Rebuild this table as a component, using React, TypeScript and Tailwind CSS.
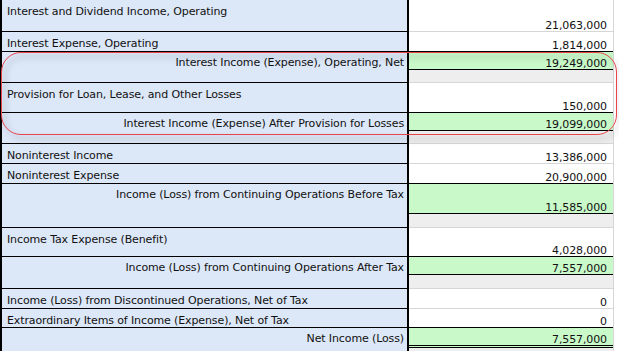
import React from "react";

type Row = {
  kind: "item" | "total" | "spacer";
  label?: string;
  value?: string;
  h: string;
  valueBorder?: "black" | "light" | "double";
};

const rows: Row[] = [
  { kind: "item", label: "Interest and Dividend Income, Operating", value: "21,063,000", h: "h-[32px]", valueBorder: "light" },
  { kind: "item", label: "Interest Expense, Operating", value: "1,814,000", h: "h-[20px]", valueBorder: "black" },
  { kind: "total", label: "Interest Income (Expense), Operating, Net", value: "19,249,000", h: "h-[18px]", valueBorder: "black" },
  { kind: "spacer", h: "h-[13px]" },
  { kind: "item", label: "Provision for Loan, Lease, and Other Losses", value: "150,000", h: "h-[30px]", valueBorder: "black" },
  { kind: "total", label: "Interest Income (Expense) After Provision for Losses", value: "19,099,000", h: "h-[18px]", valueBorder: "black" },
  { kind: "spacer", h: "h-[13px]" },
  { kind: "item", label: "Noninterest Income", value: "13,386,000", h: "h-[20px]", valueBorder: "light" },
  { kind: "item", label: "Noninterest Expense", value: "20,900,000", h: "h-[20px]", valueBorder: "black" },
  { kind: "total", label: "Income (Loss) from Continuing Operations Before Tax", value: "11,585,000", h: "h-[30px]", valueBorder: "black" },
  { kind: "spacer", h: "h-[14px]" },
  { kind: "item", label: "Income Tax Expense (Benefit)", value: "4,028,000", h: "h-[29px]", valueBorder: "black" },
  { kind: "total", label: "Income (Loss) from Continuing Operations After Tax", value: "7,557,000", h: "h-[18px]", valueBorder: "black" },
  { kind: "spacer", h: "h-[14px]" },
  { kind: "item", label: "Income (Loss) from Discontinued Operations, Net of Tax", value: "0", h: "h-[20px]", valueBorder: "light" },
  { kind: "item", label: "Extraordinary Items of Income (Expense), Net of Tax", value: "0", h: "h-[19px]", valueBorder: "black" },
  { kind: "total", label: "Net Income (Loss)", value: "7,557,000", h: "h-[20px]", valueBorder: "double" },
];

function RowView({ r }: { r: Row }) {
  const labelCls =
    r.kind === "total"
      ? "justify-end items-start pr-[3px] pt-[4px]"
      : r.kind === "item"
      ? "justify-start items-start pl-[5px] pt-[5px] border-b border-[#d3d7dd]"
      : "border-b border-[#d3d7dd]";
  const valueBg =
    r.kind === "total" ? "bg-[#c9f9c9]" : r.kind === "spacer" ? "bg-[#eeeeee]" : "bg-white";
  const vb =
    r.kind === "spacer"
      ? "border-b border-[#d6d6d6]"
      : r.valueBorder === "black"
      ? "border-b border-black"
      : r.valueBorder === "double"
      ? "border-b-[3px] border-double border-black"
      : "border-b border-[#d6d6d6]";
  return (
    <div className={`flex ${r.h}`}>
      <div className={`w-[407px] flex bg-[#dce7f7] border-r-2 border-black ${labelCls}`}>
        {r.label && <span className="whitespace-nowrap leading-[13px]">{r.label}</span>}
      </div>
      <div className={`w-[204px] flex justify-end items-end pr-[6px] ${valueBg} ${vb}`}>
        {r.value && <span className="leading-[10px]">{r.value}</span>}
      </div>
      <div className="w-[1px] bg-[#d6d6d6]" />
      <div className="flex-1 bg-white" />
    </div>
  );
}

export default function App() {
  return (
    <div
      className="relative w-[619px] h-[351px] overflow-hidden bg-white text-[11px] tracking-[-0.12px] text-[#111111]"
      style={{ fontFamily: '"DejaVu Sans", sans-serif' }}
    >
      <div className="border-l-2 border-black w-[619px]">
        {rows.map((r, i) => (
          <RowView key={i} r={r} />
        ))}
        <div className="flex h-[10px]">
          <div className="w-[407px] bg-[#dce7f7] border-r-2 border-black" />
          <div className="w-[204px] bg-[#eeeeee]" />
          <div className="w-[1px] bg-[#d6d6d6]" />
          <div className="flex-1 bg-white" />
        </div>
      </div>
      <div className="absolute left-[1px] top-[52px] w-[616px] h-[83px] rounded-[20px] border-[1.5px] border-[#e8454b] drop-shadow-[3px_4px_3px_rgba(0,0,0,0.4)]" />
    </div>
  );
}
